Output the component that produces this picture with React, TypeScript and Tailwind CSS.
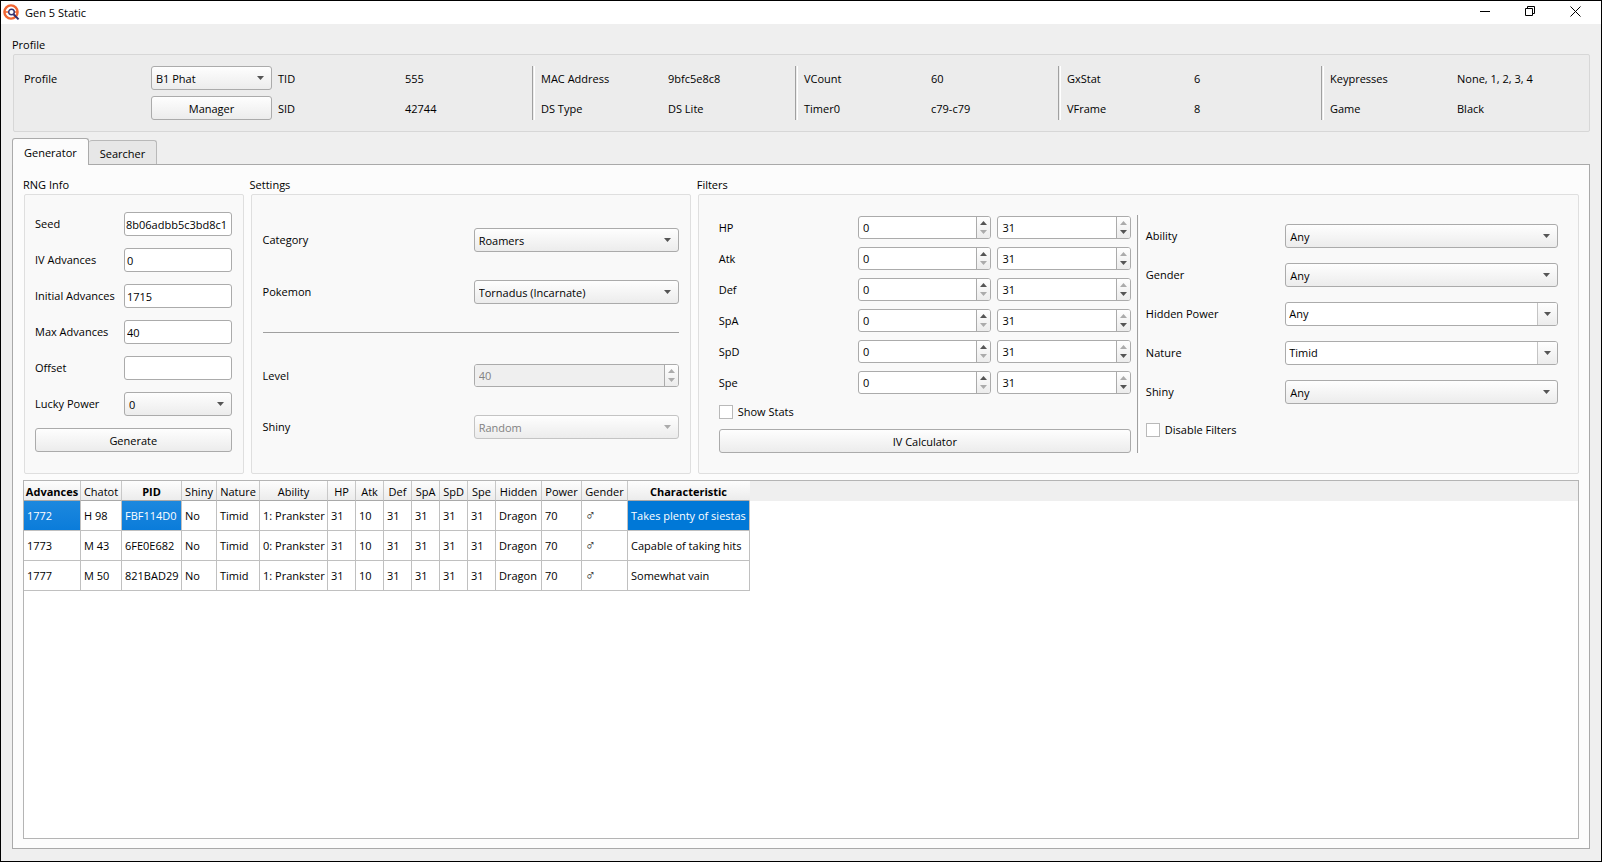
import React, { useState } from "react";

type Result = {
  advances: number;
  chatot: string;
  pid: string;
  ability: string;
  characteristic: string;
};

const results: Result[] = [
  { advances: 1772, chatot: "H 98", pid: "FBF114D0", ability: "1: Prankster", characteristic: "Takes plenty of siestas" },
  { advances: 1773, chatot: "M 43", pid: "6FE0E682", ability: "0: Prankster", characteristic: "Capable of taking hits" },
  { advances: 1777, chatot: "M 50", pid: "821BAD29", ability: "1: Prankster", characteristic: "Somewhat vain" },
];

const columns = [
  { name: "Advances", col: "w-[57px]", bold: true },
  { name: "Chatot", col: "w-[41px]" },
  { name: "PID", col: "w-[60px]", bold: true },
  { name: "Shiny", col: "w-[35px]" },
  { name: "Nature", col: "w-[43px]" },
  { name: "Ability", col: "w-[68px]" },
  { name: "HP", col: "w-[28px]" },
  { name: "Atk", col: "w-[28px]" },
  { name: "Def", col: "w-[28px]" },
  { name: "SpA", col: "w-[28px]" },
  { name: "SpD", col: "w-[28px]" },
  { name: "Spe", col: "w-[28px]" },
  { name: "Hidden", col: "w-[46px]" },
  { name: "Power", col: "w-[40px]" },
  { name: "Gender", col: "w-[46px]" },
  { name: "Characteristic", col: "w-[122px]", bold: true },
];

const stats = ["HP", "Atk", "Def", "SpA", "SpD", "Spe"];

const raised = "rounded-[3px] border border-[#ababab] bg-linear-to-b from-[#fefefe] to-[#ececec]";
const field = "min-w-0 rounded-[3px] border border-[#ababab] bg-white";

function Arrow({ up, dim }: { up?: boolean; dim?: boolean }) {
  return (
    <svg width="7" height="4" viewBox="0 0 7 4" aria-hidden="true">
      <path
        d={up ? "M0 4L3.5 0L7 4Z" : "M0 0L3.5 4L7 0Z"}
        fill={dim ? "#ababab" : "#555555"}
      />
    </svg>
  );
}

function Combo({ id, options, disabled }: { id: string; options: string[]; disabled?: boolean }) {
  return (
    <div className="relative min-w-0">
      <select
        id={id}
        disabled={disabled}
        className={
          "block h-6 w-full appearance-none px-1 pt-px outline-none disabled:border-[#c4c4c4] disabled:text-[#828282] disabled:opacity-100 " +
          raised
        }
      >
        {options.map((o) => (
          <option key={o}>{o}</option>
        ))}
      </select>
      <span className="pointer-events-none absolute inset-y-0 right-2 flex items-center">
        <Arrow dim={disabled} />
      </span>
    </div>
  );
}

// Combo box whose text can be typed into
function EditCombo({ id, value }: { id: string; value: string }) {
  return (
    <div className={"flex h-6 overflow-hidden " + field}>
      <input id={id} defaultValue={value} className="min-w-0 flex-1 px-[3px] outline-none" />
      <button
        type="button"
        aria-label={"Show options for " + id}
        className="flex w-5 items-center justify-center border-l border-[#c4c4c4] bg-linear-to-b from-[#fefefe] to-[#ececec] pr-px"
      >
        <Arrow />
      </button>
    </div>
  );
}

function Spin({
  id,
  label,
  value,
  min,
  max,
  disabled,
}: {
  id: string;
  label?: string;
  value: number;
  min: number;
  max: number;
  disabled?: boolean;
}) {
  const [n, setN] = useState(value);
  const step = (by: number) => setN(Math.min(max, Math.max(min, n + by)));

  return (
    <div className={"flex h-[23px] overflow-hidden " + field}>
      <input
        id={id}
        aria-label={label}
        inputMode="numeric"
        disabled={disabled}
        value={n}
        onChange={(e) => setN(Number(e.target.value) || 0)}
        className="min-w-0 flex-1 px-1 pt-px outline-none disabled:bg-[#efefef] disabled:text-[#828282]"
      />
      <div className="flex w-[14px] flex-col border-l border-[#ababab] bg-linear-to-b from-[#fefefe] to-[#ececec] py-px">
        <button
          type="button"
          aria-label="Increase"
          disabled={disabled}
          onClick={() => step(1)}
          className="flex flex-1 items-center justify-center"
        >
          <Arrow up dim={disabled || n >= max} />
        </button>
        <button
          type="button"
          aria-label="Decrease"
          disabled={disabled}
          onClick={() => step(-1)}
          className="flex flex-1 items-center justify-center"
        >
          <Arrow dim={disabled || n <= min} />
        </button>
      </div>
    </div>
  );
}

function PushButton({ children }: { children: React.ReactNode }) {
  return (
    <button type="button" className={"h-6 w-full pt-px " + raised}>
      {children}
    </button>
  );
}

function CheckBox({ children }: { children: React.ReactNode }) {
  return (
    <label className="flex items-center gap-[5px]">
      <input
        type="checkbox"
        className="h-3.5 w-3.5 appearance-none border border-[#b9b9b9] bg-white checked:bg-[#555555]"
      />
      {children}
    </label>
  );
}

function Group({ title, children }: { title: string; children: React.ReactNode }) {
  return (
    <section className="flex min-w-0 flex-col">
      <h2 className="h-[19px] leading-5">{title}</h2>
      <div className="ml-px flex-1 rounded-[2px] border border-[#dfdfdf] bg-[#f9f9f9]">{children}</div>
    </section>
  );
}

function VLine() {
  return <div className="row-span-2 w-[3px] border-l border-[#a0a0a0] border-r border-r-white" />;
}

function InfoPair({ a, b }: { a: [string, string]; b: [string, string] }) {
  return (
    <dl className="col-span-2 row-span-2 grid grid-cols-subgrid grid-rows-subgrid items-center [&>*]:pt-0.5">
      <dt>{a[0]}</dt>
      <dd>{a[1]}</dd>
      <dt>{b[0]}</dt>
      <dd>{b[1]}</dd>
    </dl>
  );
}

function TitleBar() {
  return (
    <header className="flex h-[23px] items-center bg-white pl-[2px]">
      <svg width="18" height="18" viewBox="0 0 18 18" aria-hidden="true">
        <circle cx="8" cy="8" r="6.6" fill="#fff" stroke="#f26532" strokeWidth="2.4" />
        <path d="M1.5 8H5M11 8H14.5" stroke="#f26532" strokeWidth="1.6" />
        <circle cx="8.5" cy="8" r="2.8" fill="#fff" stroke="#35306e" strokeWidth="1.4" />
        <path d="M10.5 10.2L15.6 15.4" stroke="#35306e" strokeWidth="2" />
      </svg>
      <h1 className="ml-1">Gen 5 Static</h1>
      <div className="ml-auto flex h-full items-center pr-[3px] pb-0.5">
        <button type="button" aria-label="Minimize" className="flex w-[45px] justify-center">
          <svg width="11" height="11" viewBox="0 0 11 11">
            <path d="M0 5.5H10" stroke="#000" />
          </svg>
        </button>
        <button type="button" aria-label="Restore" className="flex w-[45px] justify-center">
          <svg width="11" height="11" viewBox="0 0 11 11" fill="none" stroke="#000">
            <path d="M0.5 2.5H7.5V9.5H0.5ZM2.5 2.5V0.5H9.5V7.5H7.5" />
          </svg>
        </button>
        <button type="button" aria-label="Close" className="flex w-[45px] justify-center">
          <svg width="11" height="11" viewBox="0 0 11 11">
            <path d="M0.5 0.5L10.5 10.5M10.5 0.5L0.5 10.5" stroke="#000" />
          </svg>
        </button>
      </div>
    </header>
  );
}

function ProfilePanel() {
  return (
    <section>
      <h2 className="h-[18px] leading-[18px]">Profile</h2>
      <div className="ml-px grid grid-cols-[repeat(4,minmax(0,1fr))_3px_repeat(2,minmax(0,1fr))_3px_repeat(2,minmax(0,1fr))_3px_repeat(2,minmax(0,1fr))_3px_repeat(2,minmax(0,1fr))] grid-rows-[24px_24px] gap-1.5 rounded-[2px] border border-[#d7d7d7] bg-[#ececec] py-[11px] pr-[11px] pl-2.5">
        <label htmlFor="profile" className="self-center pt-0.5">
          Profile
        </label>
        <Combo id="profile" options={["B1 Phat"]} />
        <InfoPair a={["TID", "555"]} b={["SID", "42744"]} />
        <VLine />
        <InfoPair a={["MAC Address", "9bfc5e8c8"]} b={["DS Type", "DS Lite"]} />
        <VLine />
        <InfoPair a={["VCount", "60"]} b={["Timer0", "c79-c79"]} />
        <VLine />
        <InfoPair a={["GxStat", "6"]} b={["VFrame", "8"]} />
        <VLine />
        <InfoPair a={["Keypresses", "None, 1, 2, 3, 4"]} b={["Game", "Black"]} />
        <div className="col-start-2 row-start-2">
          <PushButton>Manager</PushButton>
        </div>
      </div>
    </section>
  );
}

function RngInfo() {
  const rows = [
    { id: "seed", label: "Seed", value: "8b06adbb5c3bd8c1", pad: "px-px" },
    { id: "iv-advances", label: "IV Advances", value: "0", pad: "px-0.5" },
    { id: "initial-advances", label: "Initial Advances", value: "1715", pad: "px-0.5" },
    { id: "max-advances", label: "Max Advances", value: "40", pad: "px-0.5" },
    { id: "offset", label: "Offset", value: "", pad: "px-0.5" },
  ];

  return (
    <Group title="RNG Info">
      <div className="grid grid-cols-[83px_minmax(0,1fr)] items-center gap-x-1.5 gap-y-3 pt-[17px] pr-[11px] pb-[21px] pl-2.5">
        {rows.map((r) => (
          <React.Fragment key={r.id}>
            <label htmlFor={r.id} className="whitespace-nowrap">
              {r.label}
            </label>
            <input id={r.id} defaultValue={r.value} className={"h-6 w-full outline-none " + field + " " + r.pad} />
          </React.Fragment>
        ))}
        <label htmlFor="lucky-power">Lucky Power</label>
        <Combo id="lucky-power" options={["0", "1", "2", "3"]} />
        <div className="col-span-2">
          <PushButton>Generate</PushButton>
        </div>
      </div>
    </Group>
  );
}

function Settings() {
  return (
    <Group title="Settings">
      <div className="grid grid-cols-2 items-center gap-x-1.5 gap-y-7 pt-[33px] pr-[11px] pl-[11px]">
        <label htmlFor="category">Category</label>
        <Combo id="category" options={["Roamers", "Starters", "Stationary", "Gifts"]} />
        <label htmlFor="pokemon">Pokemon</label>
        <Combo id="pokemon" options={["Tornadus (Incarnate)", "Thundurus (Incarnate)"]} />
        <div className="col-span-2 h-1 border-t border-[#a0a0a0]" />
        <label htmlFor="level">Level</label>
        <Spin id="level" value={40} min={40} max={40} disabled />
        <label htmlFor="settings-shiny">Shiny</label>
        <Combo id="settings-shiny" options={["Random"]} disabled />
      </div>
    </Group>
  );
}

function Filters() {
  return (
    <Group title="Filters">
      <div className="grid grid-cols-[minmax(0,1fr)_3px_minmax(0,1fr)] gap-x-1.5 p-5">
        <div>
          <div className="grid grid-cols-3 items-center gap-x-1.5 gap-y-2 pt-px">
            {stats.map((s) => (
              <React.Fragment key={s}>
                <label htmlFor={"min-" + s}>{s}</label>
                <Spin id={"min-" + s} value={0} min={0} max={31} />
                <Spin id={"max-" + s} label={s + " maximum"} value={31} min={0} max={31} />
              </React.Fragment>
            ))}
          </div>
          <div className="pt-2.5 pb-[9px]">
            <CheckBox>Show Stats</CheckBox>
          </div>
          <PushButton>IV Calculator</PushButton>
        </div>
        <VLine />
        <div className="grid grid-cols-3 content-start items-center gap-x-1.5 gap-y-[15px] pt-[9px] [&>div]:col-span-2">
          <label htmlFor="ability">Ability</label>
          <Combo id="ability" options={["Any", "0", "1"]} />
          <label htmlFor="gender">Gender</label>
          <Combo id="gender" options={["Any", "♂", "♀"]} />
          <label htmlFor="hidden-power">Hidden Power</label>
          <EditCombo id="hidden-power" value="Any" />
          <label htmlFor="nature">Nature</label>
          <EditCombo id="nature" value="Timid" />
          <label htmlFor="filter-shiny">Shiny</label>
          <Combo id="filter-shiny" options={["Any", "Star", "Square"]} />
          <div className="pt-[3px]">
            <CheckBox>Disable Filters</CheckBox>
          </div>
        </div>
      </div>
    </Group>
  );
}

function ResultsTable() {
  const highlight = (row: number, col: number) => {
    if (row !== 0) return "";
    if (col === 0 || col === 2) return "bg-linear-to-b from-[#1c88de] to-[#0a7cda] text-white";
    return col === columns.length - 1 ? "bg-[#0078d7] text-white" : "";
  };

  return (
    <div className="mt-1.5 flex-1 border border-[#b4b4b4] bg-white">
      <div className="bg-[#efefef]">
        <table className="w-[726px] table-fixed border-separate border-spacing-0 whitespace-nowrap">
          <colgroup>
            {columns.map((c) => (
              <col key={c.name} className={c.col} />
            ))}
          </colgroup>
          <thead>
            <tr className="h-5">
              {columns.map((c) => (
                <th
                  key={c.name}
                  className={
                    "border-r border-b border-r-[#c8c8c8] border-b-[#a9a9a9] bg-linear-to-b from-[#fdfdfd] to-[#ececec] px-0 pt-0.5 pb-0 last:border-r-transparent " +
                    (c.bold ? "font-bold" : "font-normal")
                  }
                >
                  {c.name}
                </th>
              ))}
            </tr>
          </thead>
        </table>
      </div>
      <table className="w-[726px] table-fixed border-separate border-spacing-0 whitespace-nowrap">
        <colgroup>
          {columns.map((c) => (
            <col key={c.name} className={c.col} />
          ))}
        </colgroup>
        <tbody>
          {results.map((r, i) => {
            const cells = [
              r.advances, r.chatot, r.pid, "No", "Timid", r.ability,
              31, 10, 31, 31, 31, 31, "Dragon", 70, "♂", r.characteristic,
            ];
            return (
              <tr key={r.advances} className="h-[30px]">
                {cells.map((cell, j) => (
                  <td
                    key={columns[j].name}
                    className={
                      "border-r border-b border-[#c0c0c0] py-0 pr-0 pl-[3px] " +
                      (cell === "♂" ? "font-['Liberation_Serif',serif] text-sm leading-4 italic " : "") +
                      highlight(i, j)
                    }
                  >
                    {cell}
                  </td>
                ))}
              </tr>
            );
          })}
        </tbody>
      </table>
    </div>
  );
}

export default function App() {
  const [tab, setTab] = useState("Generator");

  return (
    <div className="flex min-h-screen flex-col border border-black bg-[#efefef] font-['Open_Sans','Noto_Sans',sans-serif] text-[11px] leading-4 text-black">
      <TitleBar />
      <main className="flex flex-1 flex-col px-[11px] pt-3 pb-3">
        <ProfilePanel />
        <div role="tablist" className="mt-1.5 flex items-end">
          {["Generator", "Searcher"].map((name) => (
            <button
              key={name}
              type="button"
              role="tab"
              aria-selected={tab === name}
              onClick={() => setTab(name)}
              className={
                tab === name
                  ? "relative -mb-px h-[27px] rounded-t-[3px] border border-b-0 border-[#ababab] bg-[#fcfcfc] px-[11px] pt-0.5"
                  : "h-6 rounded-t-[3px] border border-b-0 border-l-0 border-[#b9b9b9] bg-[#e7e7e7] px-[11px] pt-0.5"
              }
            >
              {name}
            </button>
          ))}
        </div>
        <div className="flex flex-1 flex-col border border-[#a9a9a9] bg-[#fcfcfc] px-2.5 pt-2.5 pb-[9px]">
          <div className="grid grid-cols-[1fr_2fr_4fr] gap-1.5">
            <RngInfo />
            <Settings />
            <Filters />
          </div>
          <ResultsTable />
        </div>
      </main>
    </div>
  );
}
